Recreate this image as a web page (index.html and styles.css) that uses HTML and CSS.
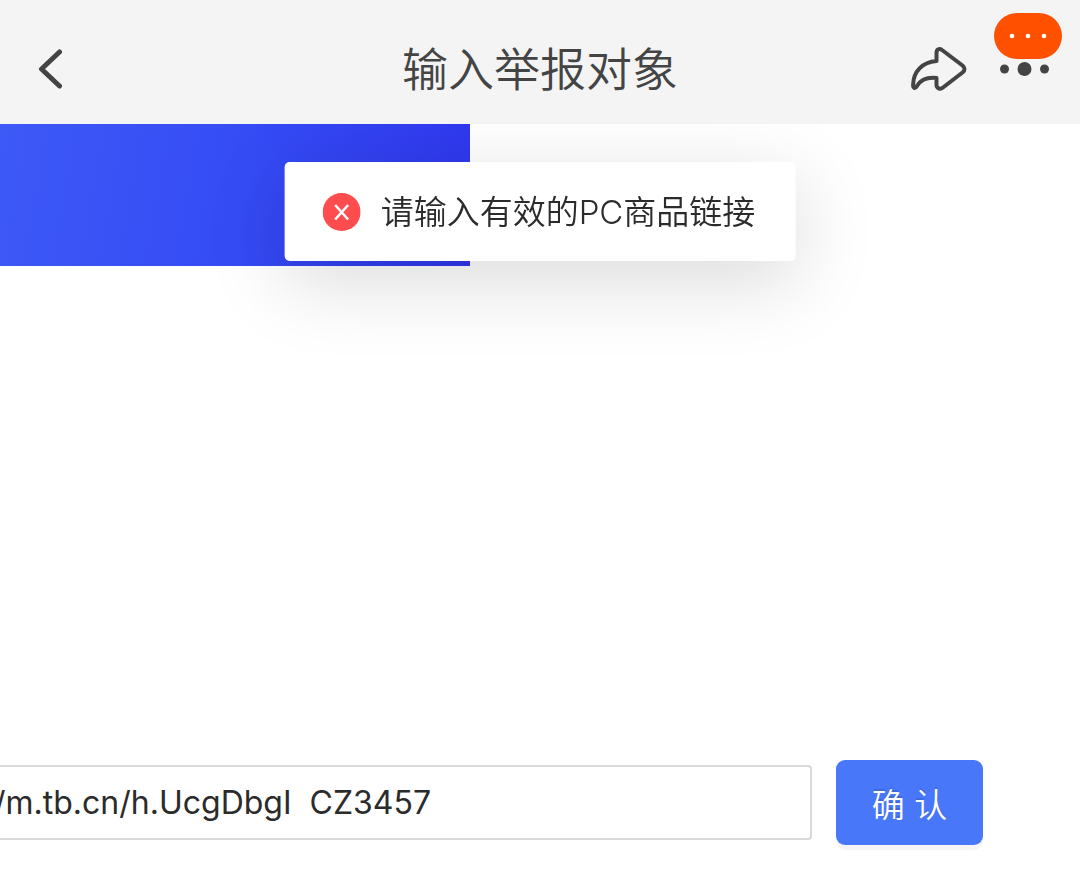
FILE: index.html
```html
<!DOCTYPE html>
<html lang="zh-CN">
<head>
<meta charset="utf-8">
<meta name="viewport" content="width=device-width, initial-scale=1">
<title>输入举报对象</title>
<link rel="stylesheet" href="styles.css">
</head>
<body>
<header class="navbar">
  <button class="icon-button back" type="button" aria-label="返回">
    <svg width="24" height="40" viewBox="0 0 24 40"><path d="M21.500 3 3.500 20 21.500 37" fill="none" stroke="#444" stroke-width="5" stroke-linecap="round" stroke-linejoin="round"/></svg>
  </button>
  <h1 class="title">输入举报对象</h1>
  <div class="actions">
    <button class="icon-button" type="button" aria-label="分享">
      <svg width="56" height="46" viewBox="0 0 56 46"><path d="M25.500 15V7C25.500 3 28.500 2 31 4L51.500 19.500Q55.500 23 51.500 26.500L32 41.500C29 44 25.500 42 25.500 39V32C16 31 9.500 34 6 40C4 43.500 1.500 42 2.200 38C2.500 26 11 16 25.500 15Z" fill="none" stroke="#444" stroke-width="4" stroke-linejoin="round"/></svg>
    </button>
    <button class="icon-button more" type="button" aria-label="更多">
      <svg width="50" height="14" viewBox="0 0 50 14" fill="#444"><circle cx="4.500" cy="7" r="4.500"/><circle cx="24.500" cy="7" r="7"/><circle cx="44.500" cy="7" r="4.500"/></svg>
      <span class="badge">
        <svg width="38" height="6" viewBox="0 0 38 6" fill="#fff"><circle cx="3" cy="3" r="2.300"/><circle cx="19" cy="3" r="2.300"/><circle cx="35" cy="3" r="2.300"/></svg>
      </span>
    </button>
  </div>
</header>
<main class="page">
  <div class="banner"></div>
  <form class="search">
    <input class="link-input" type="text" aria-label="商品链接" value="/m.tb.cn/h.UcgDbgI  CZ3457">
    <button class="confirm" type="button">确 认</button>
  </form>
</main>
<div class="toast" role="alert">
  <svg width="38" height="38" viewBox="0 0 38 38"><circle cx="19" cy="19" r="19" fill="#ff4d4f"/><path d="m12.500 12 13 14.500M25.500 12 12.500 26.500" stroke="#fff" stroke-width="2.600"/></svg>
  <span>请输入有效的PC商品链接</span>
</div>
</body>
</html>
```
FILE: styles.css
```css
* {
  box-sizing: border-box;
}

body {
  margin: 0;
  min-height: 100vh;
  display: flex;
  flex-direction: column;
  background: #fff;
  color: #2b2b2b;
  font-family: Inter, "Noto Sans CJK SC", sans-serif;
}

button,
input {
  font: inherit;
}

.navbar {
  position: relative;
  z-index: 2;
  display: grid;
  grid-template-columns: 1fr auto 1fr;
  align-items: center;
  height: 124px;
  padding: 14px 30px 0;
  background: #f4f4f4;
}

.icon-button {
  display: flex;
  padding: 0;
  border: 0;
  background: none;
}

.back {
  justify-self: start;
  padding-left: 8px;
}

.title {
  margin: 0;
  color: #444;
  font-size: 46px;
  font-weight: 350;
  line-height: 64px;
}

.actions {
  display: flex;
  align-items: center;
  justify-content: flex-end;
  gap: 33px;
}

.more {
  position: relative;
}

.badge {
  position: absolute;
  right: -12px;
  bottom: 17px;
  display: flex;
  align-items: center;
  justify-content: center;
  width: 68px;
  height: 46px;
  border-radius: 23px;
  background: #ff5000;
}

.page {
  flex: 1;
  display: flex;
  flex-direction: column;
  justify-content: space-between;
}

.banner {
  width: 470px;
  max-width: 100%;
  height: 142px;
  background: linear-gradient(100deg, #3d59f6, #354cf5 50%, #2f37ee);
}

.search {
  display: flex;
  align-items: center;
  gap: 24px;
  padding: 0 97px 42px 0;
}

.link-input {
  flex: 1;
  min-width: 0;
  height: 75px;
  margin-left: -8px;
  padding: 0;
  border: 2px solid #d9d9d9;
  border-radius: 4px;
  background: #fff;
  color: #2b2b2b;
  font-size: 32px;
}

.confirm {
  width: 147px;
  height: 85px;
  padding: 0;
  border: 0;
  border-radius: 9px;
  background: #4877fa;
  box-shadow: 0 5px 0 rgba(0, 0, 0, 0.04);
  color: #fff;
  font-size: 33px;
  font-weight: 350;
  text-shadow: 0 -2px 0 rgba(0, 0, 0, 0.12);
}

.toast {
  position: fixed;
  z-index: 1;
  top: 162px;
  left: 50%;
  display: flex;
  align-items: center;
  gap: 20px;
  padding: 26px 40px 25px 38px;
  border-radius: 5px;
  background: #fff;
  box-shadow: 0 20px 80px rgba(0, 0, 0, 0.15);
  font-size: 33px;
  font-weight: 350;
  line-height: 48px;
  white-space: nowrap;
  transform: translateX(-50%);
}
```
